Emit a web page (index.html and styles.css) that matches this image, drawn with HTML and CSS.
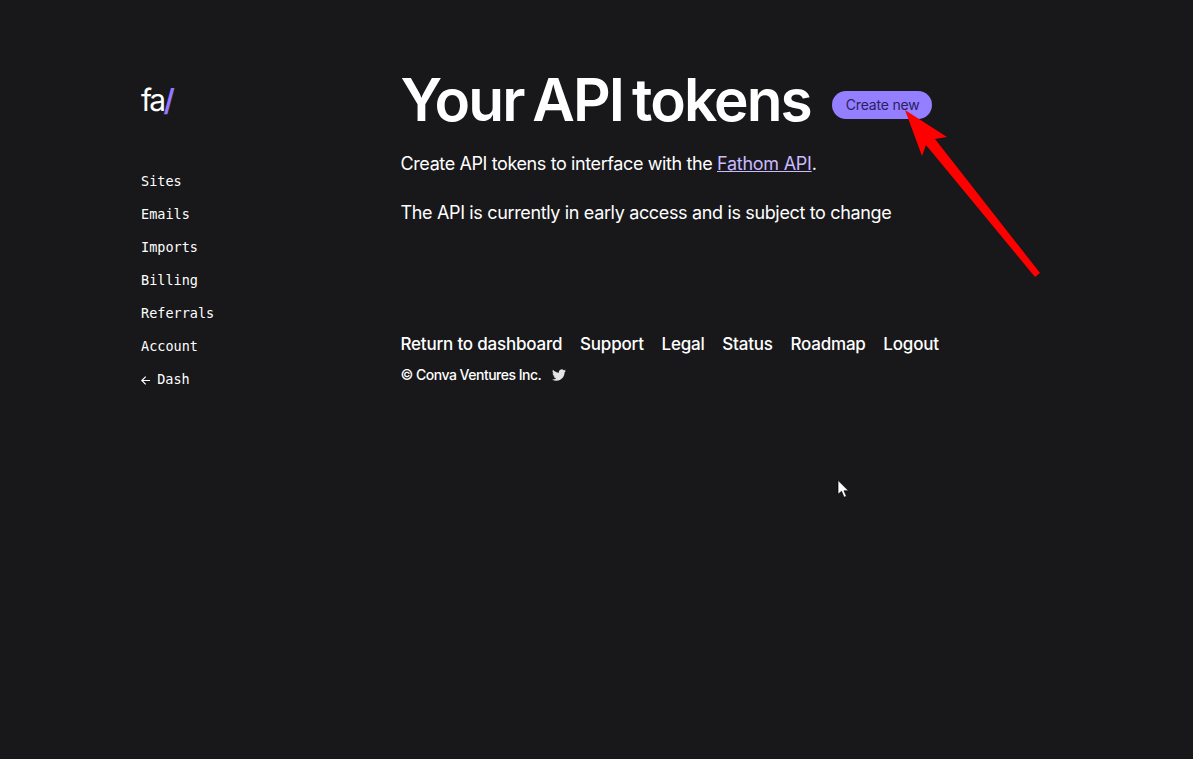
FILE: index.html
```html
<!DOCTYPE html>
<html lang="en">
<head>
<meta charset="utf-8">
<title>Your API tokens</title>
<link rel="stylesheet" href="styles.css">
</head>
<body>
<div class="page">
  <aside class="sidebar">
    <div class="logo">fa<span class="logo-slash">/</span></div>
    <nav class="side-nav">
      <a href="#">Sites</a>
      <a href="#">Emails</a>
      <a href="#">Imports</a>
      <a href="#">Billing</a>
      <a href="#">Referrals</a>
      <a href="#">Account</a>
      <a href="#"><svg class="back-arrow" viewBox="0 0 9 9" aria-hidden="true"><path d="M9 4.500H.8M4.700 .6.800 4.500l3.900 3.900"/></svg> Dash</a>
    </nav>
  </aside>
  <main class="main">
    <div class="title-row">
      <h1>Your API tokens</h1>
      <a class="create-btn" href="#">Create new</a>
    </div>
    <p class="intro">Create API tokens to interface with the <a href="#">Fathom API</a>.</p>
    <p class="note">The API is currently in early access and is subject to change</p>
    <nav class="foot-nav">
      <a href="#">Return to dashboard</a>
      <a href="#">Support</a>
      <a href="#">Legal</a>
      <a href="#">Status</a>
      <a href="#">Roadmap</a>
      <a href="#">Logout</a>
    </nav>
    <div class="copyright">
      <span>© Conva Ventures Inc.</span>
      <svg class="twitter" viewBox="0 0 24 24" aria-hidden="true"><path d="M23.953 4.57a10 10 0 01-2.825.775 4.958 4.958 0 002.163-2.723c-.951.555-2.005.959-3.127 1.184a4.92 4.92 0 00-8.384 4.482C7.69 8.095 4.067 6.13 1.64 3.162a4.822 4.822 0 00-.666 2.475c0 1.71.87 3.213 2.188 4.096a4.904 4.904 0 01-2.228-.616v.06a4.923 4.923 0 003.946 4.827 4.996 4.996 0 01-2.212.085 4.936 4.936 0 004.604 3.417 9.867 9.867 0 01-6.102 2.105c-.39 0-.779-.023-1.17-.067a13.995 13.995 0 007.557 2.209c9.053 0 13.998-7.496 13.998-13.985 0-.21 0-.42-.015-.63A9.935 9.935 0 0024 4.59z"/></svg>
    </div>
  </main>
</div>
<svg class="overlay" viewBox="0 0 1193 759" aria-hidden="true">
  <polygon class="arrow" points="905,110 947,137 935,139 1040,273 1035,277 926,145 922,156"/>
  <polygon class="cursor" points="838,480.300 838,494.300 841.500,491.300 844,497.300 846.500,496.300 844,490.800 848.500,490.800" />
</svg>
</body>
</html>
```

FILE: styles.css
```css
* { box-sizing: border-box; }
html, body { margin: 0; height: 100%; }
body {
  background: #18181b;
  color: #fff;
  font-family: Inter, "Liberation Sans", sans-serif;
  overflow: hidden;
  position: relative;
}
a { color: inherit; text-decoration: none; }
.page {
  display: flex;
  padding: 0 0 0 141px;
}
.sidebar {
  width: 259.500px;
  flex: none;
  padding-top: 84px;
}
.logo {
  font-size: 30px;
  line-height: 33px;
  font-weight: 400;
  letter-spacing: -2.500px;
  height: 33px;
}
.logo-slash { color: #9179ff; font-weight: 600; }
.side-nav {
  display: flex;
  flex-direction: column;
  margin-top: 48px;
  font-family: "DejaVu Sans Mono", "Liberation Mono", monospace;
  font-size: 13.5px;
  line-height: 33px;
}
.back-arrow {
  width: 9px;
  height: 9px;
  margin-right: -0.900px;
  fill: none;
  stroke: #fff;
  stroke-width: 1.2;
  vertical-align: -1px;
}
.main { flex: 1; padding-top: 66px; }
.title-row {
  display: flex;
  align-items: center;
  height: 68px;
}
h1 {
  margin: 0;
  font-size: 58.500px;
  line-height: 68px;
  font-weight: 600;
  letter-spacing: -1.9px;
  word-spacing: -4px;
}
.create-btn {
  margin: 10px 0 0 21px;
  height: 28px;
  padding: 0 13px 0 14px;
  border-radius: 14px;
  background: #937fff;
  color: #2b2060;
  font-size: 14px;
  line-height: 28px;
  letter-spacing: -0.2px;
}
.intro, .note {
  margin: 0;
  font-size: 18px;
  line-height: 28px;
  letter-spacing: -0.35px;
}
.intro { margin-top: 16px; letter-spacing: -0.39px; }
.intro a { color: #c9bbff; text-decoration: underline; letter-spacing: -0.25px; }
.note { margin-top: 21px; }
.foot-nav {
  display: flex;
  gap: 17.700px;
  margin-top: 103px;
  font-size: 17px;
  line-height: 28px;
  font-weight: 500;
  letter-spacing: -0.2px;
}
.copyright {
  display: flex;
  align-items: center;
  gap: 11px;
  margin-top: 7px;
  font-size: 14px;
  line-height: 20px;
  font-weight: 500;
  letter-spacing: -0.5px;
}
.twitter { width: 14px; height: 14px; fill: #e4e4e7; }
.overlay {
  position: absolute;
  left: 0;
  top: 0;
  width: 1193px;
  height: 759px;
  pointer-events: none;
}
.arrow { fill: #ff0000; }
.cursor { fill: #fff; stroke: #000; stroke-width: 0.7; }
```
